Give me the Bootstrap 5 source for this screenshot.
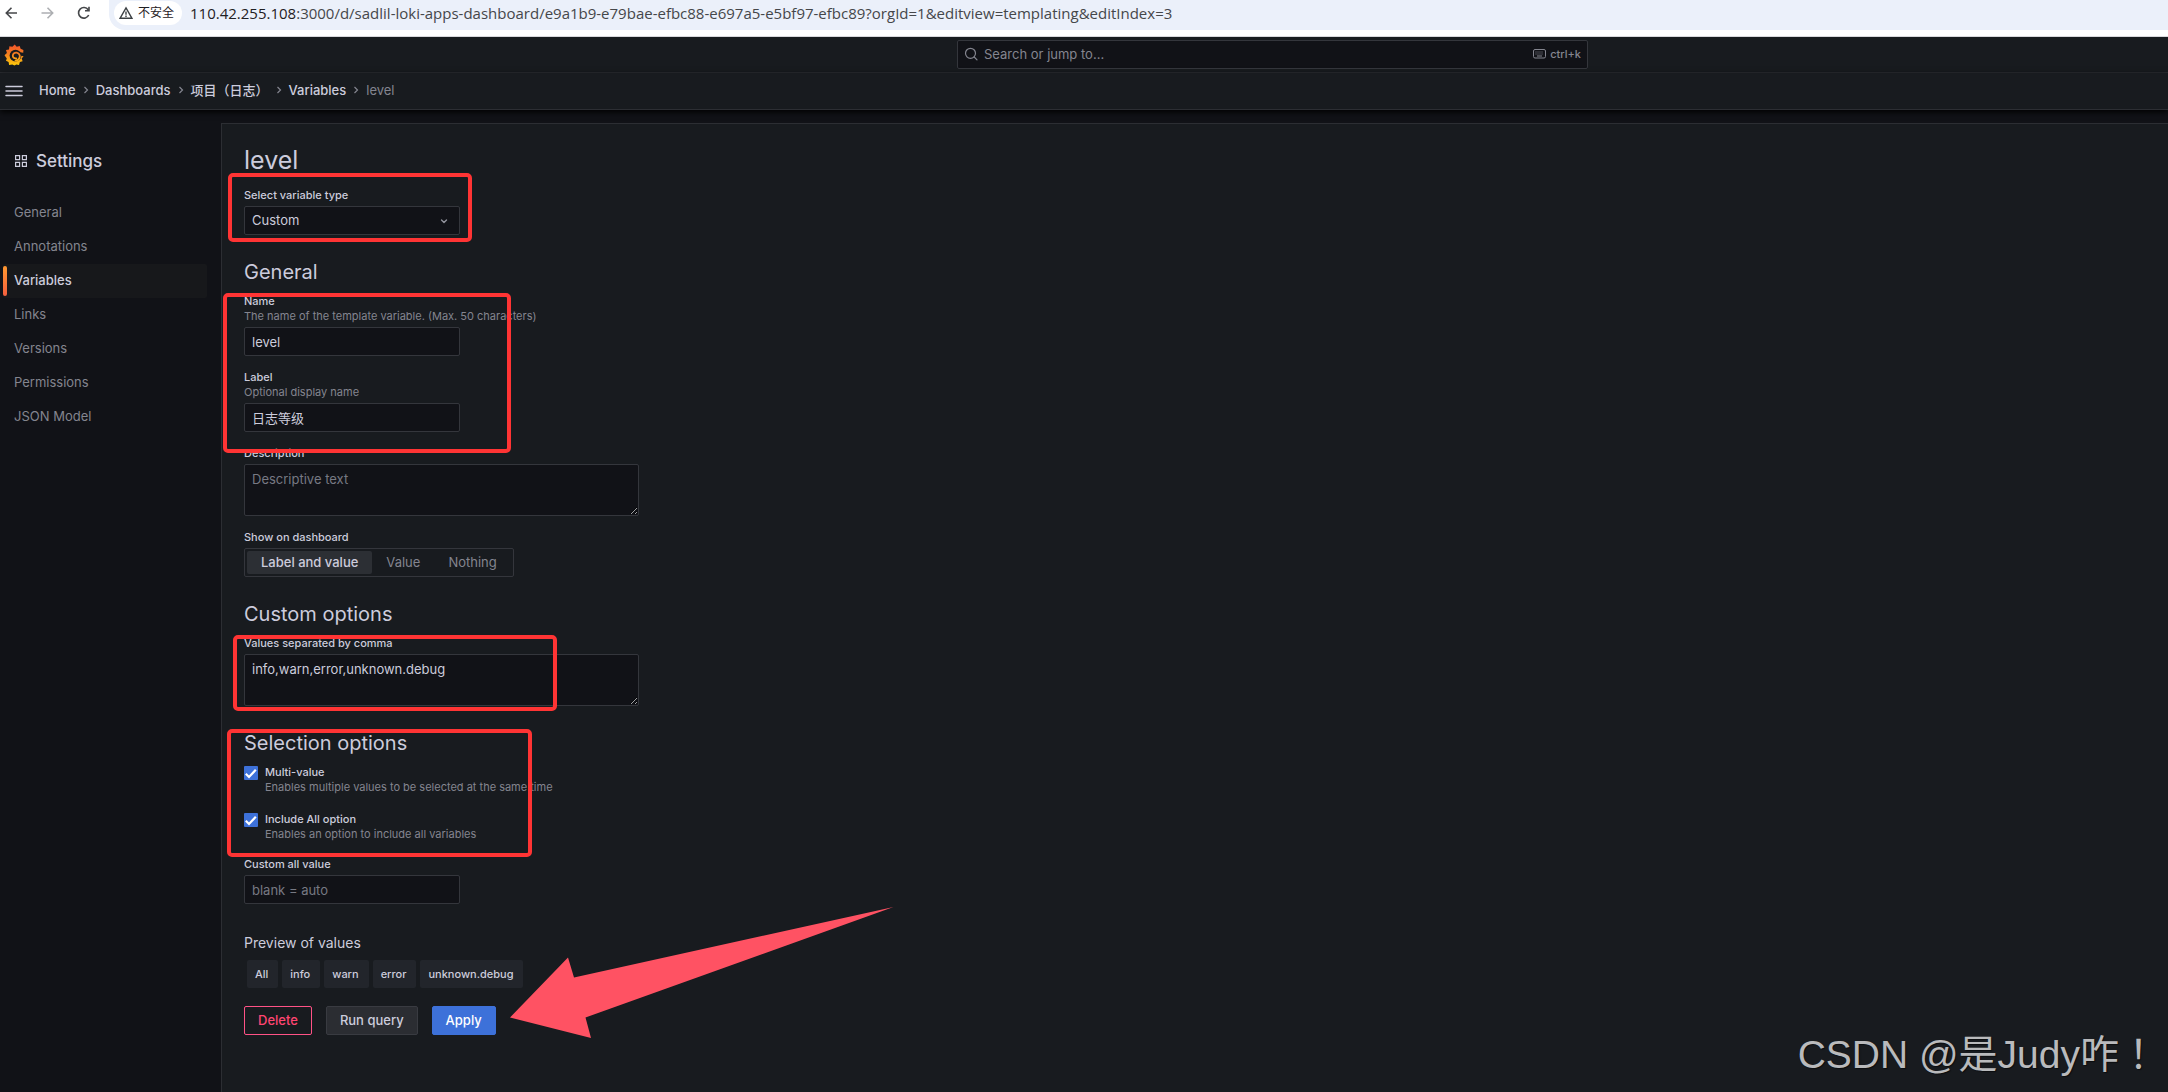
<!DOCTYPE html>
<html lang="zh-CN" data-bs-theme="dark">
<head>
<meta charset="utf-8">
<meta name="viewport" content="width=device-width, initial-scale=1">
<title>level - Variables - Settings - Grafana</title>
<link href="https://cdn.jsdelivr.net/npm/bootstrap@5.3.0/dist/css/bootstrap.min.css" rel="stylesheet">
<style>
  :root {
    --canvas: #111217;
    --panel: #181b1f;
    --line: #2c2e33;
    --field-line: #34363c;
    --text: #ccccdc;
    --muted: #84858f;
    --blue: #3d71d9;
    --mark: #ff3434;
  }
  body {
    background: var(--canvas);
    color: var(--text);
    font: 400 13px/20px Inter, "Noto Sans CJK SC", sans-serif;
  }
  a { color: inherit; text-decoration: none; }
  h1, h2, h3 { color: var(--text); }

  /* Browser toolbar */
  .browser-bar { height: 37px; background: #fff; color: #45474a; border-bottom: 1px solid #d8d8dc; font-family: "Open Sans", "Noto Sans CJK SC", sans-serif; }
  .browser-nav { width: 109px; height: 26px; padding-left: 4px; gap: 20px; }
  .browser-nav button { width: 16px; height: 26px; }
  .icon-btn { background: none; border: 0; padding: 0; line-height: 0; color: inherit; }
  .address { height: 30px; background: #ebf0fa; border-radius: 0 0 0 16px; padding: 1px 0 5px 5px; gap: 8px; }
  .site-info { height: 24px; background: #fff; border-radius: 12px; padding: 0 8px 0 5px; gap: 5px; font-size: 12px; color: #1f2023; }
  .url-text { font-size: 15px; line-height: 24px; color: #45474a; white-space: nowrap; }
  .url-text b { font-weight: 400; color: #1f2023; }

  /* Application header */
  .app-top { height: 36px; background: var(--panel); border-bottom: 1px solid var(--line); display: grid; grid-template-columns: 957fr 631fr 580fr; align-items: center; }
  .brand { padding-left: 4px; line-height: 0; }
  .search-box { height: 29px; background: var(--canvas); border: 1px solid var(--field-line); border-radius: 2px; padding: 0 6px 2px; gap: 6px; color: var(--muted); }
  .search-box input { background: none; border: 0; outline: 0; padding: 0; color: inherit; }
  .search-box input::placeholder { color: var(--muted); }
  .shortcut { font-size: 11px; font-weight: 500; gap: 4px; }
  .crumb-bar { height: 37px; background: var(--panel); border-bottom: 1px solid var(--line); padding: 0 0 1px 5px; gap: 16px; box-shadow: 0 2px 6px #000; position: relative; }
  .crumbs { font-weight: 500; line-height: 18px; padding-bottom: 2px; }
  .crumbs li { display: flex; align-items: center; }
  .crumbs svg { margin: 0 7px; color: var(--muted); }
  .crumbs .active { color: var(--muted); font-weight: 400; }

  /* Settings sidebar */
  .shell { display: flex; flex: 1 1 auto; }
  .side { flex: 0 0 221px; padding: 41px 14px 0 3px; }
  .side h3 { font-size: 17px; line-height: 20px; font-weight: 500; gap: 9px; padding-left: 12px; margin: 0 0 25px; }
  .side .nav-link { height: 34px; padding: 0 11px; line-height: 33px; color: var(--muted); position: relative; border-radius: 2px; }
  .side .nav-link.active { background: #17181b; color: var(--text); font-weight: 500; }
  .side .nav-link.active::before { content: ""; position: absolute; left: 0; top: 2px; bottom: 2px; width: 4px; border-radius: 2px; background: linear-gradient(#ff9830, #f55f3e); }

  /* Variable editor */
  .editor { flex: 1 1 auto; margin-top: 13px; background: var(--panel); border: 1px solid var(--line); border-width: 1px 0 0 1px; padding: 21px 22px 24px; position: relative; }
  .editor h1 { font-size: 25px; line-height: 30px; font-weight: 400; margin: 0 0 13px; }
  .editor h2 { font-size: 20px; line-height: 26px; font-weight: 400; margin: 0 0 9px; }
  .editor h3 { font-size: 14px; line-height: 20px; font-weight: 400; margin: 0 0 7px; }
  .group { margin-bottom: 24px; }
  .group:last-of-type { margin-bottom: 29px; }
  .field + .field { margin-top: 14px; }
  .field .form-label, .field legend { display: block; font-size: 11px; line-height: 15px; font-weight: 500; color: var(--text); margin: 0 0 3px; }
  .hint { display: block; font-weight: 400; color: var(--muted); }
  .editor .form-control, .editor .form-select { font-size: 13px; line-height: 19px; padding: 4px 7px; height: 29px; width: 216px; background-color: var(--canvas); border: 1px solid var(--field-line); border-radius: 2px; color: var(--text); }
  .editor .form-control::placeholder { color: #777983; }
  .editor .form-select { background-image: url("data:image/svg+xml,%3Csvg xmlns='http://www.w3.org/2000/svg' viewBox='0 0 10 10' fill='none' stroke='%2391929c' stroke-width='1.4' stroke-linecap='round' stroke-linejoin='round'%3E%3Cpath d='M2.500 4L5 6.500 7.500 4'/%3E%3C/svg%3E"); background-size: 10px 10px; background-position: right 10px center; }
  .editor textarea.form-control { width: 395px; height: 52px; padding-top: 5px; resize: both; }
  .switch { display: inline-flex; height: 29px; padding: 2px; border: 1px solid var(--field-line); border-radius: 2px; }
  .switch label { padding: 0 14px; line-height: 23px; color: var(--muted); border-radius: 2px; }
  .switch input:checked + label { background: #2c2f34; color: var(--text); font-weight: 500; }
  .tick { display: flex; gap: 7px; margin-bottom: 17px; font-size: 11px; line-height: 15px; }
  .tick + .tick { margin-bottom: 15px; }
  .tick .form-check-input { width: 14px; height: 14px; margin: 1px 0 0; flex: none; border: 0; border-radius: 1px; }
  .tick .form-check-input:checked { background-color: var(--blue); background-image: url("data:image/svg+xml,%3Csvg xmlns='http://www.w3.org/2000/svg' viewBox='0 0 14 14' fill='none' stroke='%23fff' stroke-width='2.2'%3E%3Cpath d='M1.800 7.800L5 11 11.800 3.800'/%3E%3C/svg%3E"); }
  .tick label { font-weight: 500; }
  .chips { display: flex; gap: 4px; padding-left: 3px; margin-bottom: 18px; font-size: 11px; font-weight: 500; line-height: 28px; }
  .chips span { background: #22252b; border-radius: 2px; padding: 0 10px 0 8px; }
  .actions { display: flex; gap: 14px; }
  .actions .btn { height: 29px; padding: 0 13px; font-size: 13px; line-height: 27px; font-weight: 500; border-radius: 2px; }
  .btn-drop { color: #ff4571; border-color: #ff5286; background: none; }
  .btn-run { color: var(--text); background: #2b2d32; border-color: #393b41; }
  .btn-apply { color: #fff; background: var(--blue); border-color: var(--blue); }

  /* Annotations drawn over the form */
  .ring { position: absolute; border: 4px solid var(--mark); border-radius: 5px; pointer-events: none; }
  .ring-type { left: 6px; top: 49px; width: 244px; height: 69px; }
  .ring-name { left: 1px; top: 169px; width: 288px; height: 160px; }
  .ring-values { left: 11px; top: 511px; width: 324px; height: 76px; }
  .ring-select { left: 5px; top: 605px; width: 305px; height: 128px; }
  .pointer { position: absolute; left: 288px; top: 783px; pointer-events: none; }
  .stamp { position: absolute; right: 10px; bottom: 12px; font: 39px/50px "Liberation Sans", "Noto Sans CJK TC", sans-serif; color: #b9babc; text-shadow: 1px 1px 1px #0008; white-space: nowrap; }
</style>
<script src="https://cdn.jsdelivr.net/npm/bootstrap@5.3.0/dist/js/bootstrap.bundle.min.js" defer></script>
</head>
<body class="d-flex flex-column min-vh-100">

<div class="browser-bar d-flex">
  <div class="browser-nav d-flex align-items-center">
    <button class="icon-btn" aria-label="Back"><svg width="16" height="16" viewBox="0 0 16 16" fill="none" stroke="#45474a" stroke-width="1.6"><path d="M13 8H2.500M7.500 2.800L2.300 8l5.200 5.200"/></svg></button>
    <button class="icon-btn" aria-label="Forward"><svg width="16" height="16" viewBox="0 0 16 16" fill="none" stroke="#adafb2" stroke-width="1.6"><path d="M1.500 8H12.500M7.500 2.800L12.700 8l-5.200 5.200"/></svg></button>
    <button class="icon-btn" aria-label="Reload"><svg width="16" height="16" viewBox="0 0 16 16" fill="none" stroke="#45474a" stroke-width="1.6"><path d="M12.700 10a5.300 5.300 0 1 1-.5-5.200M13 1.800v4H9"/></svg></button>
  </div>
  <div class="address d-flex flex-grow-1 align-items-center">
    <div class="site-info d-flex align-items-center">
      <svg width="14" height="14" viewBox="0 0 14 14" fill="none" stroke="#3c4043" stroke-width="1.400"><path d="M7 1.800L13 12.300H1z"/><path d="M7 5.500v3.200M7 9.600v1.300"/></svg>
      <span>不安全</span>
    </div>
    <div class="url-text"><b>110.42.255.108</b>:3000/d/sadlil-loki-apps-dashboard/e9a1b9-e79bae-efbc88-e697a5-e5bf97-efbc89?orgId=1&amp;editview=templating&amp;editIndex=3</div>
  </div>
</div>

<header>
  <div class="app-top">
    <a class="brand" href="#" aria-label="Grafana">
      <svg width="21" height="22" viewBox="0 0 21 22">
        <defs><linearGradient id="flame" gradientUnits="userSpaceOnUse" x1="0" y1="0" x2="0" y2="21"><stop offset="0" stop-color="#f0502d"/><stop offset=".5" stop-color="#f58220"/><stop offset="1" stop-color="#fcc80a"/></linearGradient></defs>
        <path fill="url(#flame)" d="M10.700.5l2 2.300 3-.8.900 2.800 2.800 1.200-.2 3.200-2.400.6.900 1.600 1.900 1.200-1.900 1.700.9 3-2.700.7-.9 2.900-2.700-.4-1.800 1-2.200-1-3.200.6-.5-3-2.600-1.300.8-2.400L.5 11.200l2.400-2.100L2 6l3-.6L5.400 2.300l3 .5z"/>
        <circle cx="11.500" cy="11.600" r="5.900" fill="#181b1f"/>
        <path fill="#181b1f" d="M15 8l5.500 1v2.200l-4 .8z"/>
        <path fill="none" stroke="url(#flame)" stroke-width="1.800" stroke-linecap="round" d="M12.300 14.300c-2 .5-3.600-.9-3.500-2.700.1-2 1.900-3.300 3.800-3 2.300.4 3.600 2.500 3.100 4.700-.5 2-2.100 3.400-4.200 3.400"/>
      </svg>
    </a>
    <div class="search-box d-flex align-items-center">
      <svg width="14" height="14" viewBox="0 0 14 14" fill="none" stroke="currentColor" stroke-width="1.200" stroke-linecap="round"><circle cx="6.500" cy="6.300" r="5"/><path d="M10.200 10l2.800 2.800"/></svg>
      <input class="flex-grow-1" type="text" placeholder="Search or jump to..." aria-label="Search or jump to">
      <span class="shortcut d-flex align-items-center"><svg width="13" height="10" viewBox="0 0 13 10" fill="none" stroke="currentColor"><rect x=".5" y=".5" width="12" height="8.500" rx="1.500"/><path stroke-dasharray="1 1" d="M2.500 3h8M2.500 5h8"/><path d="M4 7h5"/></svg>ctrl+k</span>
    </div>
  </div>
  <div class="crumb-bar d-flex align-items-center">
    <button class="icon-btn" aria-label="Menu"><svg width="18" height="12" viewBox="0 0 18 12" stroke="#ccccdc" stroke-width="1.500" stroke-linecap="round"><path d="M1 1.500h16M1 6h16M1 10.500h16"/></svg></button>
    <nav aria-label="breadcrumb">
      <ol class="crumbs list-unstyled d-flex mb-0">
        <li><a href="#">Home</a><svg width="6" height="8" viewBox="0 0 6 8" fill="none" stroke="currentColor" stroke-width="1.200"><path d="M1.500 1l3 3-3 3"/></svg></li>
        <li><a href="#">Dashboards</a><svg width="6" height="8" viewBox="0 0 6 8" fill="none" stroke="currentColor" stroke-width="1.200"><path d="M1.500 1l3 3-3 3"/></svg></li>
        <li><a href="#">项目（日志）</a><svg width="6" height="8" viewBox="0 0 6 8" fill="none" stroke="currentColor" stroke-width="1.200"><path d="M1.500 1l3 3-3 3"/></svg></li>
        <li><a href="#">Variables</a><svg width="6" height="8" viewBox="0 0 6 8" fill="none" stroke="currentColor" stroke-width="1.200"><path d="M1.500 1l3 3-3 3"/></svg></li>
        <li class="active" aria-current="page">level</li>
      </ol>
    </nav>
  </div>
</header>

<div class="shell">
  <aside class="side">
    <h3 class="d-flex align-items-center"><svg width="12" height="12" viewBox="0 0 12 12" fill="none" stroke="#ccccdc" stroke-width="1.200"><path d="M.6.6h4v4h-4zM7.400.6h4v4h-4zM.6 7.400h4v4h-4zM7.400 7.400h4v4h-4z"/></svg>Settings</h3>
    <nav class="nav flex-column" aria-label="Settings">
      <a class="nav-link" href="#">General</a>
      <a class="nav-link" href="#">Annotations</a>
      <a class="nav-link active" href="#">Variables</a>
      <a class="nav-link" href="#">Links</a>
      <a class="nav-link" href="#">Versions</a>
      <a class="nav-link" href="#">Permissions</a>
      <a class="nav-link" href="#">JSON Model</a>
    </nav>
  </aside>

  <main class="editor">
    <form>
      <h1>level</h1>
      <div class="group">
        <div class="field">
          <label class="form-label" for="vtype">Select variable type</label>
          <select class="form-select" id="vtype"><option>Custom</option></select>
        </div>
      </div>

      <section class="group">
        <h2>General</h2>
        <div class="field">
          <label class="form-label" for="vname">Name<span class="hint">The name of the template variable. (Max. 50 characters)</span></label>
          <input class="form-control" id="vname" type="text" value="level">
        </div>
        <div class="field">
          <label class="form-label" for="vlabel">Label<span class="hint">Optional display name</span></label>
          <input class="form-control" id="vlabel" type="text" value="日志等级">
        </div>
        <div class="field">
          <label class="form-label" for="vdesc">Description</label>
          <textarea class="form-control" id="vdesc" placeholder="Descriptive text"></textarea>
        </div>
        <fieldset class="field">
          <legend>Show on dashboard</legend>
          <div class="switch">
            <input class="btn-check" type="radio" name="show" id="show1" checked><label for="show1">Label and value</label>
            <input class="btn-check" type="radio" name="show" id="show2"><label for="show2">Value</label>
            <input class="btn-check" type="radio" name="show" id="show3"><label for="show3">Nothing</label>
          </div>
        </fieldset>
      </section>

      <section class="group">
        <h2>Custom options</h2>
        <div class="field">
          <label class="form-label" for="vvalues">Values separated by comma</label>
          <textarea class="form-control" id="vvalues" spellcheck="false">info,warn,error,unknown.debug</textarea>
        </div>
      </section>

      <section class="group">
        <h2>Selection options</h2>
        <div class="tick">
          <input class="form-check-input" type="checkbox" id="multi" checked>
          <div><label class="d-block" for="multi">Multi-value</label><span class="hint">Enables multiple values to be selected at the same time</span></div>
        </div>
        <div class="tick">
          <input class="form-check-input" type="checkbox" id="incall" checked>
          <div><label class="d-block" for="incall">Include All option</label><span class="hint">Enables an option to include all variables</span></div>
        </div>
        <div class="field">
          <label class="form-label" for="vall">Custom all value</label>
          <input class="form-control" id="vall" type="text" placeholder="blank = auto">
        </div>
      </section>

      <h3>Preview of values</h3>
      <div class="chips"><span>All</span><span>info</span><span>warn</span><span>error</span><span>unknown.debug</span></div>
      <div class="actions">
        <button type="button" class="btn btn-drop">Delete</button>
        <button type="button" class="btn btn-run">Run query</button>
        <button type="button" class="btn btn-apply">Apply</button>
      </div>
    </form>

    <div class="ring ring-type"></div>
    <div class="ring ring-name"></div>
    <div class="ring ring-values"></div>
    <div class="ring ring-select"></div>
    <svg class="pointer" width="385" height="132" viewBox="0 0 385 132"><path fill="#ff5263" d="M0 110.500L58 50.500l6 20L383.500 0 75.500 110.500 81 131z"/></svg>
    <div class="stamp" lang="zh-Hant">CSDN @是Judy咋！</div>
  </main>
</div>
</body>
</html>
